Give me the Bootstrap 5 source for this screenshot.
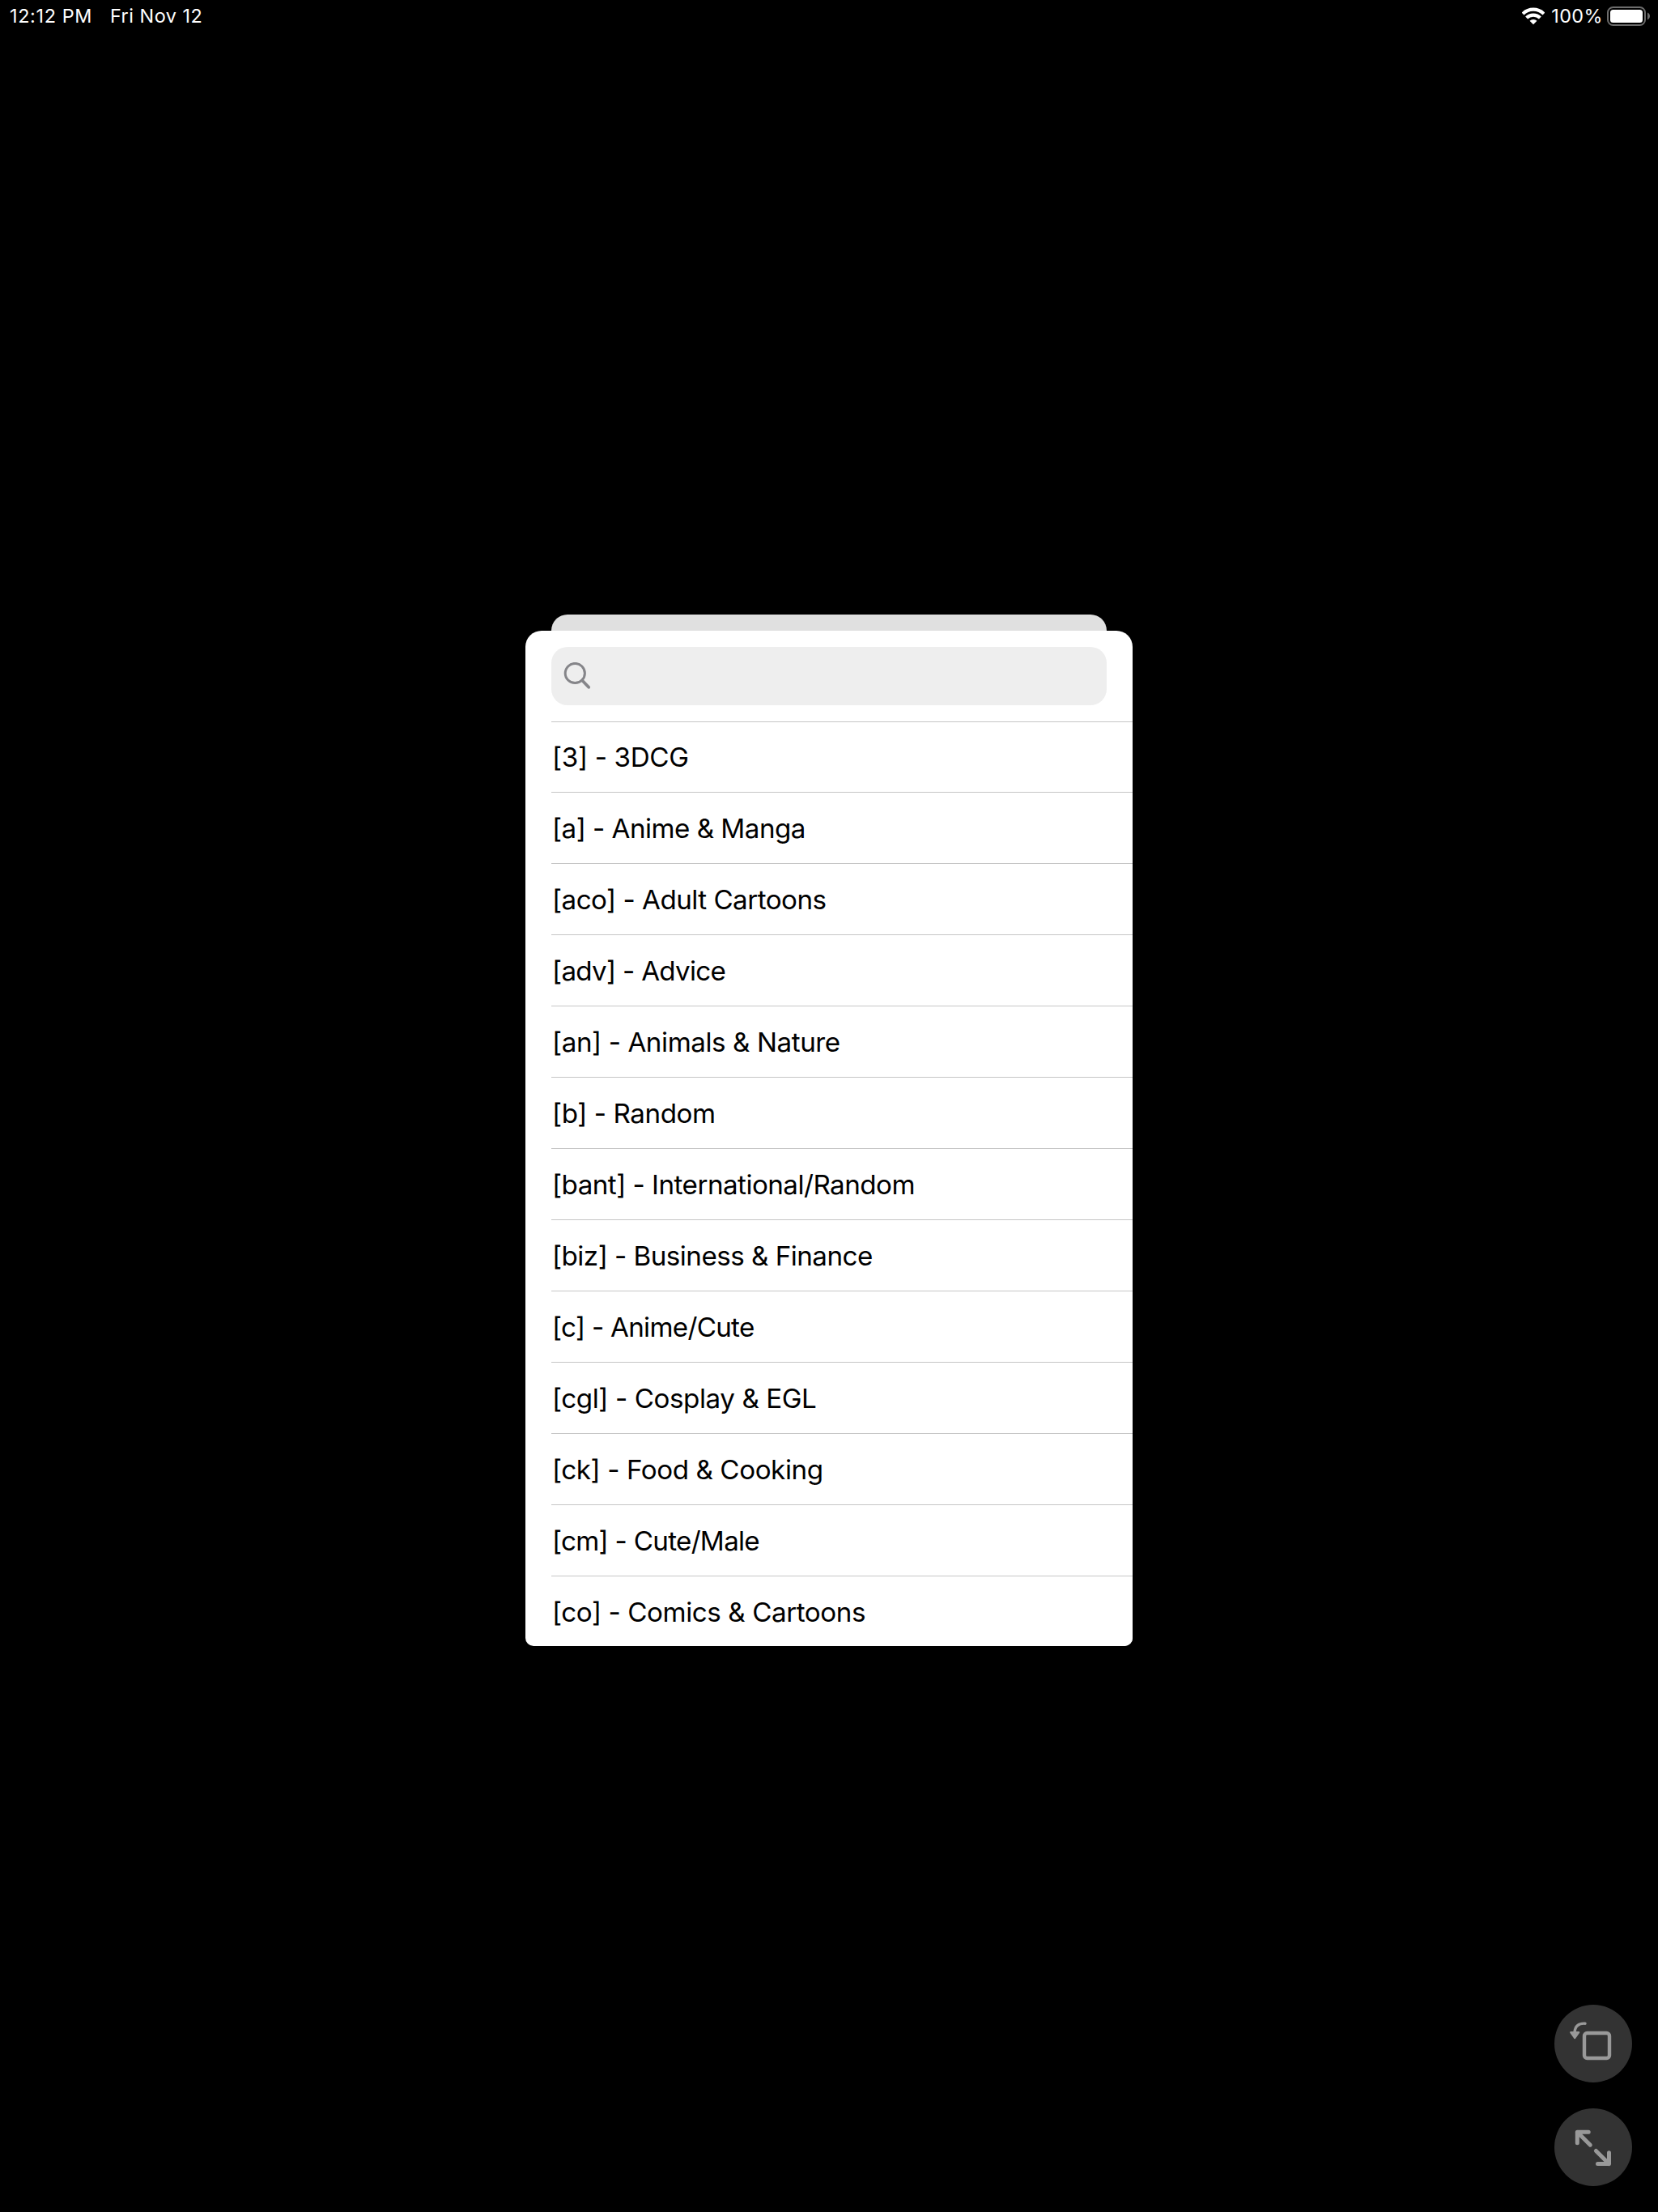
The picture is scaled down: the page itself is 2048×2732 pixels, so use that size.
<!DOCTYPE html>
<html lang="en">
<head>
<meta charset="utf-8">
<meta name="viewport" content="width=device-width, initial-scale=1">
<title>Boards</title>
<link href="https://cdn.jsdelivr.net/npm/bootstrap@5.3.0/dist/css/bootstrap.min.css" rel="stylesheet">
<style>
  body { background: #000; font-family: Inter, "Liberation Sans", sans-serif; }
  .screen { height: 2732px; width: 2048px; }
  .status-bar { height: 40px; color: #fff; font-size: 23.4px; line-height: 40px; font-weight: 400; padding-left: 12px; padding-right: 9px; }
  .clock { width: 124px; letter-spacing: .65px; }
  .day { letter-spacing: .5px; }
  .percent { letter-spacing: .45px; margin-left: 8px; margin-right: 5px; }
  .sheet-area { padding-top: 719px; }
  .sheet-behind { width: 686px; height: 20px; background: #e0e0e0; border-radius: 20px 20px 0 0; }
  .sheet { width: 750px; height: 1254px; border-radius: 20px 20px 10px 10px; }
  .search-field { height: 72px; margin: 20px 32px; background: #eee; border-radius: 20px; padding-left: 15px; }
  .boards { margin-left: 32px; --bs-list-group-bg: #fff; --bs-list-group-color: #000; }
  .boards .list-group-item { height: 88px; border: 0; border-top: 1px solid #c6c6c6; padding: 0 0 0 1px; font-size: 33.2px; line-height: 88px; letter-spacing: -.43px; white-space: nowrap; }
  .boards .list-group-item:first-child { height: 87px; line-height: 87px; letter-spacing: -.35px; }
  .boards .snug { letter-spacing: -.53px; }
  .boards .tight { letter-spacing: -.72px; }
  .controls { right: 32px; bottom: 32px; gap: 32px; }
  .round-btn { width: 96px; height: 96px; background: #333; }
</style>
</head>
<body>
<div class="screen position-relative overflow-hidden">
  <header class="status-bar d-flex align-items-center">
    <span class="clock">12:12 PM</span>
    <span class="day">Fri Nov 12</span>
    <svg class="ms-auto" width="28" height="22" viewBox="0 0 28 22" fill="none" stroke="#fff" stroke-width="4.200">
      <path d="M1 8.100a18.400 18.400 0 0 1 26 0"/>
      <path d="M5.600 13a11.900 11.900 0 0 1 16.800 0"/>
      <path d="M14 21.300l-4.500-4.500a6.300 6.300 0 0 1 9 0z" fill="#fff" stroke="none"/>
    </svg>
    <span class="percent">100%</span>
    <svg width="54" height="24" viewBox="0 0 54 24">
      <rect x="1" y="1" width="46" height="22" rx="6.500" fill="none" stroke="#6c6c6c" stroke-width="2"/>
      <rect x="4" y="4" width="40" height="16" rx="3.500" fill="#fff"/>
      <path d="M50 7.600c4 1.600 4 7.200 0 8.800z" fill="#6c6c6c"/>
    </svg>
  </header>

  <main class="sheet-area d-flex flex-column align-items-center">
    <div class="sheet-behind"></div>
    <section class="sheet bg-white overflow-hidden">
      <div class="search-field d-flex align-items-center">
        <svg width="34" height="34" viewBox="0 0 34 34" fill="none" stroke="#858589" stroke-linecap="round">
          <circle cx="14.300" cy="13.500" r="12.100" stroke-width="3"/>
          <path d="M23 22.300l8.200 8.500" stroke-width="3.800"/>
        </svg>
      </div>
      <ul class="boards list-group list-group-flush">
        <li class="list-group-item">[3] - 3DCG</li>
        <li class="list-group-item snug">[a] - Anime &amp; Manga</li>
        <li class="list-group-item snug">[aco] - Adult Cartoons</li>
        <li class="list-group-item tight">[adv] - Advice</li>
        <li class="list-group-item">[an] - Animals &amp; Nature</li>
        <li class="list-group-item">[b] - Random</li>
        <li class="list-group-item snug">[bant] - International/Random</li>
        <li class="list-group-item snug">[biz] - Business &amp; Finance</li>
        <li class="list-group-item tight">[c] - Anime/Cute</li>
        <li class="list-group-item">[cgl] - Cosplay &amp; EGL</li>
        <li class="list-group-item">[ck] - Food &amp; Cooking</li>
        <li class="list-group-item tight">[cm] - Cute/Male</li>
        <li class="list-group-item">[co] - Comics &amp; Cartoons</li>
      </ul>
    </section>
  </main>

  <div class="controls position-absolute d-flex flex-column">
    <div class="round-btn rounded-circle">
      <svg width="96" height="96" viewBox="0 0 96 96" fill="none" stroke="#999" stroke-width="4.400">
        <rect x="37" y="35" width="31" height="31" rx="3.500"/>
        <path d="M38 23.200c-8-.5-12.600 3.300-13 11" stroke-width="3.400" stroke-linecap="round"/>
        <path d="M20.200 34.200h10l-5 7z" fill="#999" stroke-width="2.200" stroke-linejoin="round"/>
      </svg>
    </div>
    <div class="round-btn rounded-circle">
      <svg width="96" height="96" viewBox="0 0 96 96" fill="none" stroke="#999" stroke-width="5" stroke-linecap="round" stroke-linejoin="round">
        <path d="M28.300 42.700V29.300H42.200M28.300 29.300L44.300 45.200"/>
        <path d="M67.500 54.800V68.500H53.500M67.500 68.500L51.400 52.400"/>
      </svg>
    </div>
  </div>
</div>
<script src="https://cdn.jsdelivr.net/npm/bootstrap@5.3.0/dist/js/bootstrap.bundle.min.js"></script>
</body>
</html>
